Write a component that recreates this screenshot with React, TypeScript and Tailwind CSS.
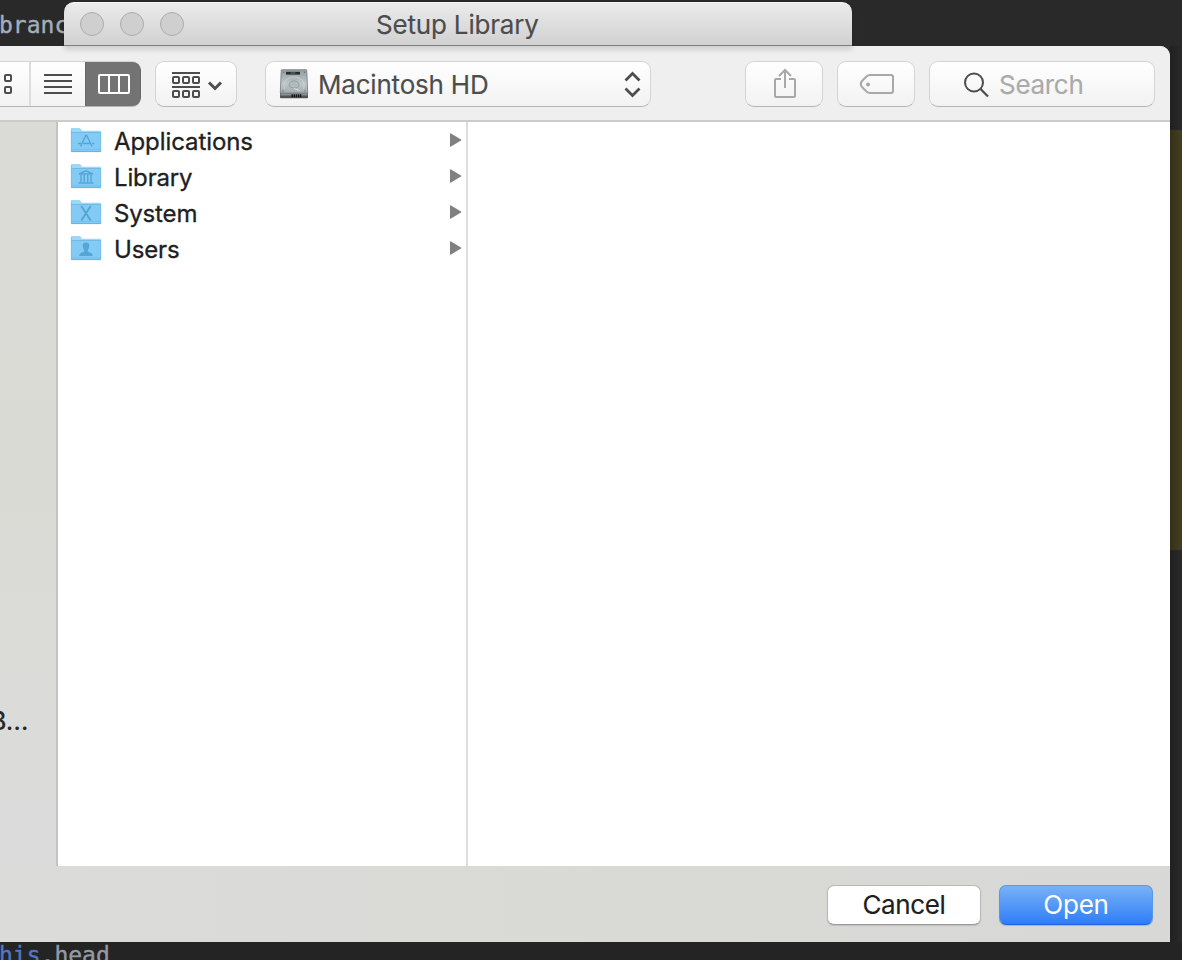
import type { ReactNode } from "react";

const ui = "font-['Inter','Liberation_Sans',sans-serif]";
const control =
  "flex h-[46px] shrink-0 items-center rounded-[9px] border border-[#d4d4d4] border-b-[#b5b5b5] bg-linear-to-b from-white to-[#f2f2f2]";

function TitleBar() {
  return (
    <div className="relative z-10 mt-[2px] ml-[64px] flex h-[44px] w-[788px] shrink-0 items-center rounded-t-[10px] border-t border-b border-t-[#f5f5f5] border-b-[#7f7f7f] bg-linear-to-b from-[#ebebeb] to-[#d1d1d1] pl-4 shadow-[0_4px_5px_rgba(0,0,0,0.13)]">
      <div className="flex w-[104px] gap-4">
        {[0, 1, 2].map((n) => (
          <span key={n} className="size-6 rounded-full border border-[#adadad] bg-[#cfcfcf]" />
        ))}
      </div>
      <h1 className="ml-[192px] pt-[2px] text-[26px] leading-8 font-normal tracking-[-0.18px] whitespace-nowrap text-[#4c4c4c] [-webkit-text-stroke:0.15px]">
        Setup Library
      </h1>
    </div>
  );
}

function ViewSwitch() {
  return (
    <div className="flex h-[46px] w-[141px] shrink-0 overflow-hidden rounded-r-[9px] border-t border-b border-t-[#d4d4d4] border-b-[#b5b5b5] bg-linear-to-b from-white to-[#f2f2f2]">
      <div className="w-[31px] border-r-2 border-[#dddddd]">
        <svg className="block h-[44px] w-[29px]" viewBox="0 0 29 44" fill="none" stroke="#4d4d4d" strokeWidth="2">
          <rect x="5" y="13" width="6" height="6" rx="1" />
          <rect x="5" y="25" width="6" height="6" rx="1" />
        </svg>
      </div>
      <svg className="block h-[44px] w-[54px]" viewBox="0 0 54 44" stroke="#4d4d4d" strokeWidth="2">
        <path d="M13 13h28M13 19h28M13 25h28M13 31h28" />
      </svg>
      <div className="-my-px h-[46px] w-[56px] rounded-r-[9px] border border-[#676767] bg-[#737373]">
        <svg className="block h-[44px] w-[54px]" viewBox="0 0 54 44" fill="none" stroke="white" strokeWidth="2">
          <rect x="13" y="13" width="30" height="18" rx="1" />
          <path d="M23 13v18M33 13v18" />
        </svg>
      </div>
    </div>
  );
}

function ArrangeIcon() {
  return (
    <svg className="block h-[44px] w-[80px]" viewBox="0 0 80 44" fill="none" stroke="#4d4d4d" strokeWidth="2">
      <path d="M16 11h28M16 25h28" />
      {[16, 26, 36].map((x) => (
        <g key={x}>
          <rect x={x + 1} y="15" width="6" height="6" rx="1" />
          <rect x={x + 1} y="29" width="6" height="6" rx="1" />
        </g>
      ))}
      <path d="m53 20.500 6 6 6-6" strokeWidth="3" />
    </svg>
  );
}

function DriveIcon() {
  return (
    <svg className="mr-[9px] block h-[32px] w-[30px] shrink-0" viewBox="0 0 30 32">
      <defs>
        <linearGradient id="driveTop" x1="0" y1="0" x2="0" y2="1">
          <stop offset="0" stopColor="#929da0" />
          <stop offset="0.6" stopColor="#bdc6c9" />
          <stop offset="1" stopColor="#a3abae" />
        </linearGradient>
      </defs>
      <path d="M1 24.500h28v5q0 .8-.8.8H1.800q-.8 0-.8-.8z" fill="#505355" />
      <path d="M2.200 2.500q0-.8.800-.8h24q.8 0 .8.800L28.700 25H1.300z" fill="url(#driveTop)" stroke="#727b7e" strokeWidth=".8" />
      <path d="M1.500 25.300h27v2.200h-27z" fill="#888e90" />
      <path d="M12.500 27.700h10.500" stroke="#151515" strokeWidth="3" strokeDasharray="1.400 .7" />
      <rect x="7" y="3.800" width="14" height="2.800" fill="#272b2d" />
      <path d="M11.500 5h5" stroke="#8e9799" strokeWidth=".7" />
      <path d="M5.500 21c-2-7 2-12 9.500-12s11.500 5 9.500 12" fill="none" stroke="#d3dadc" strokeWidth=".7" />
      <path d="M10 17c0-2 2.200-4.200 5-4.200s5 2.200 5 4.200-2 3-5 3-5-1-5-3z" fill="#b1bbbe" stroke="#899396" strokeWidth=".7" />
      <path d="m15 20.500 5.500 2" stroke="#e4e8e8" strokeWidth=".9" />
      <g fill="#656e71">
        <circle cx="4.500" cy="4.200" r=".7" />
        <circle cx="25.500" cy="4.200" r=".7" />
        <circle cx="4" cy="23" r=".7" />
        <circle cx="26" cy="23" r=".7" />
      </g>
    </svg>
  );
}

function Toolbar() {
  return (
    <header className="flex h-[76px] shrink-0 items-start border-b-2 border-[#cbcbcb] bg-[#efefef] pt-[15px]">
      <ViewSwitch />
      <button className={`${control} ml-[14px] w-[82px]`} aria-label="Arrange items">
        <ArrangeIcon />
      </button>
      <button className={`${control} ml-[28px] w-[386px] pl-[13px]`}>
        <DriveIcon />
        <span className="pt-px text-[26px] leading-8 tracking-[-0.2px] whitespace-nowrap text-[#4d4d4d] [-webkit-text-stroke:0.15px]">
          Macintosh HD
        </span>
        <svg className="mr-[9px] ml-auto block h-[28px] w-[18px]" viewBox="0 0 18 28" fill="none" stroke="#4d4d4d" strokeWidth="2.700">
          <path d="m2.500 10.500 7-7 7 7M2.500 18.500l7 7 7-7" />
        </svg>
      </button>
      <button className={`${control} ml-[94px] w-[78px]`} aria-label="Share">
        <svg className="block h-[44px] w-[76px]" viewBox="0 0 76 44" fill="none" stroke="#a8a8a8" strokeWidth="2">
          <path d="M35 17h-5q-1 0-1 1v16q0 1 1 1h18q1 0 1-1V18q0-1-1-1h-5M39 26V8M33 14l6-6 6 6" />
        </svg>
      </button>
      <button className={`${control} ml-[14px] w-[78px]`} aria-label="Edit tags">
        <svg className="block h-[44px] w-[76px]" viewBox="0 0 76 44" fill="none" stroke="#a8a8a8" strokeWidth="2">
          <path d="M32 13h21q2 0 2 2v14q0 2-2 2H32q-2 0-3.500-1.500L24 25q-2.500-3 0-6l4.500-4.500Q30 13 32 13Z" />
          <circle cx="30" cy="22.500" r="2" fill="#a8a8a8" stroke="none" />
        </svg>
      </button>
      <div className={`${control} ml-[14px] w-[226px] pl-[33px]`}>
        <svg className="mr-[9px] block size-[27px]" viewBox="0 0 27 27" fill="none" stroke="#4d4d4d" strokeWidth="2">
          <circle cx="11" cy="11.500" r="9" />
          <path d="m17.300 17.800 7.700 7.700" strokeWidth="2.300" />
        </svg>
        <span className="pt-px text-[26px] leading-8 tracking-[-0.3px] text-[#aaaaaa] [-webkit-text-stroke:0.15px]">Search</span>
      </div>
    </header>
  );
}

function Folder({ children }: { children: ReactNode }) {
  return (
    <svg className="mr-[12px] block h-[26px] w-[32px] shrink-0" viewBox="0 0 32 26">
      <path d="M1 24V1.800Q1 1 1.800 1H9q1 0 1.500.7L12 3.700h18q1 0 1 1V24z" fill="#9ad8f8" />
      <path d="M1 6h30v18.200q0 .8-.8.8H1.800Q1 25 1 24.200z" fill="#83cbf5" />
      <path d="M1 5.500h30" stroke="#6fbbe6" />
      <path d="M1 22.500h30" stroke="#6fbde8" strokeWidth=".7" />
      <path d="M1 24.600h30" stroke="#62aedb" strokeWidth=".9" />
      <path d="M1.300 2v22M30.700 5v19" stroke="#6bb9e5" strokeWidth=".6" />
      <g fill="none" stroke="#55a5d6" strokeWidth="1.400">{children}</g>
    </svg>
  );
}

function Disclosure() {
  return (
    <svg className="mr-[4px] ml-auto block h-[14px] w-[13px]" viewBox="0 0 13 14">
      <path d="M1 .5Q1 0 2 .5l10 6q.8.500 0 1l-10 6q-1 .5-1 0z" fill="#808080" />
    </svg>
  );
}

const folders: { name: string; tracking: string; glyph: ReactNode }[] = [
  {
    name: "Applications",
    tracking: "tracking-[-0.08px]",
    glyph: <path d="m10.500 19.500 5.300-11h.9l5.300 11M8 16.500h3M13 16.500h7M22 16.500h2.500" />,
  },
  {
    name: "Library",
    tracking: "tracking-[-0.15px]",
    glyph: <path d="m9 11 7-3.200 7 3.200zM11 12v7M14.300 12v7M17.700 12v7M21 12v7M8.500 20h15" />,
  },
  {
    name: "System",
    tracking: "tracking-[-0.15px]",
    glyph: <path d="m11.300 7 9.400 14.500M20.700 7l-9.400 14.500" strokeWidth="2" />,
  },
  {
    name: "Users",
    tracking: "tracking-[-0.15px]",
    glyph: (
      <path
        d="M16 7.500c2.300 0 3.500 1.300 3.300 3.500-.1 2-.8 3-1.500 4v1.500c1 1 5 1 5 4.500H9.200c0-3.500 4-3.500 5-4.500V15c-.7-1-1.400-2-1.500-4-.2-2.200 1-3.500 3.300-3.500z"
        fill="#55a5d6"
        stroke="none"
      />
    ),
  },
];

function Browser() {
  return (
    <div className="flex h-[744px] shrink-0">
      <aside className="flex w-[58px] shrink-0 flex-col overflow-hidden border-r-2 border-[#c3c4c1] bg-linear-to-b from-[#dadad6] via-[#dadad5] to-[#dbdbdb]">
        <span className="mt-[583px] -ml-[10px] text-[25px] leading-8 font-medium tracking-[-0.7px] whitespace-nowrap text-[#272727]">
          B…
        </span>
      </aside>
      <section className="w-[410px] shrink-0 border-r-2 border-[#dddddd] bg-white">
        <ul>
          {folders.map((folder) => (
            <li key={folder.name} className="flex h-9 items-center pl-3">
              <Folder>{folder.glyph}</Folder>
              <span
                className={`pt-1 text-[24px] leading-8 whitespace-nowrap text-[#202020] [-webkit-text-stroke:0.3px] ${folder.tracking}`}
              >
                {folder.name}
              </span>
              <Disclosure />
            </li>
          ))}
        </ul>
      </section>
      <section className="flex-1 bg-white" />
    </div>
  );
}

function Footer() {
  return (
    <footer className="flex h-[76px] shrink-0 items-start justify-end gap-[18px] bg-linear-to-r from-[#dbdbda] via-[#d9dad5] to-[#d8d8d7] pt-[19px] pr-[17px]">
      <button className="h-[40px] w-[154px] rounded-[7px] border border-[#b8b8b6] border-b-[#999] bg-white text-[26px] leading-8 tracking-[-0.35px] text-[#202020] shadow-[0_1px_1px_rgba(0,0,0,0.12)] [-webkit-text-stroke:0.15px]">
        Cancel
      </button>
      <button className="h-[40px] w-[154px] rounded-[7px] border border-[#559ae9] border-b-[#1d62ee] bg-linear-to-b from-[#78b1f5] to-[#2e7cf7] text-[26px] leading-8 tracking-[-0.2px] text-white shadow-[0_1px_1px_rgba(0,0,0,0.16)]">
        Open
      </button>
    </footer>
  );
}

export default function App() {
  return (
    <main className={`relative flex h-[960px] w-[1182px] flex-col overflow-hidden bg-[#292929] ${ui}`}>
      <span className="absolute top-[11px] -left-px font-['DejaVu_Sans_Mono',monospace] text-[23px] leading-7 text-[#a3aeb9] [-webkit-text-stroke:0.4px]">
        branch
      </span>
      <TitleBar />
      <div className="flex h-[896px] shrink-0">
        <div className="relative flex w-[1170px] shrink-0 flex-col overflow-hidden rounded-tr-[10px] bg-[#efefef]">
          <Toolbar />
          <Browser />
          <Footer />
        </div>
        <div className="flex flex-1 flex-col bg-linear-to-r from-[#202020] to-[#2a2a2a] pt-[84px]">
          <div className="h-[420px] bg-linear-to-r from-[#353117] to-[#443f22]" />
        </div>
      </div>
      <div className="-ml-[1px] h-[18px] shrink-0 overflow-hidden bg-[#242424] font-['DejaVu_Sans_Mono',monospace] text-[23px] leading-[27px] whitespace-pre text-[#929ba5] [-webkit-text-stroke:0.4px]">
        <span className="text-[#5077c2]">his</span>.head
      </div>
    </main>
  );
}
